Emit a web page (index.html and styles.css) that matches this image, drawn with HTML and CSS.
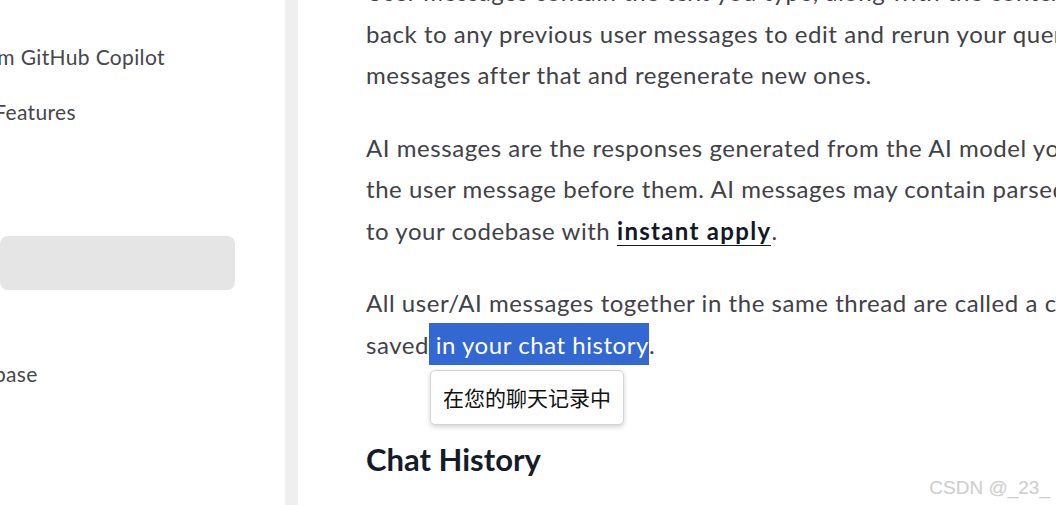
FILE: index.html
```html
<!DOCTYPE html>
<html lang="en">
<head>
<meta charset="utf-8">
<title>Chat</title>
<link rel="stylesheet" href="styles.css">
</head>
<body>
<div class="page">
  <aside class="sidebar">
    <ul class="nav">
      <li class="nav-item"><span class="nav-text shift-a">Migrate from GitHub Copilot</span></li>
      <li class="nav-item"><span class="nav-text shift-b">Core Features</span></li>
      <li class="nav-item nav-gap"><span class="nav-text shift-c">Chat</span></li>
      <li class="nav-item active"><span class="nav-text shift-c">Chat</span></li>
      <li class="nav-item"><span class="nav-text shift-e">Overview</span></li>
      <li class="nav-item"><span class="nav-text shift-d">Codebase</span></li>
    </ul>
  </aside>
  <div class="track"></div>
  <main class="content">
    <p class="para first">User messages contain the text you type, along with the context items. You can return<br>back to any previous user messages to edit and rerun your queries, which will delete all<br>messages after that and regenerate new ones.</p>
    <p class="para">AI messages are the responses generated from the AI model you selected, in response to<br>the user message before them. AI messages may contain parsed code blocks which can be applied<br>to your codebase with <a class="link" href="#">instant apply</a>.</p>
    <p class="para">All user/AI messages together in the same thread are called a conversation, and are<br>saved<span class="hl"> in your chat history<span class="tip">在您的聊天记录中</span></span>.</p>
    <h2 class="heading">Chat History</h2>
  </main>
</div>
<div class="watermark">CSDN @_23_</div>
</body>
</html>
```

FILE: styles.css
```css
html, body {
  margin: 0;
  padding: 0;
  background: #ffffff;
  overflow: hidden;
  width: 1056px;
  height: 505px;
}

.page {
  display: flex;
  height: 505px;
  font-family: "Lato", "Liberation Sans", sans-serif;
}

.sidebar {
  width: 285px;
  flex: none;
  overflow: hidden;
}

.nav {
  list-style: none;
  margin: 0;
  padding: 29px 0 0 0;
  width: 235px;
}

.nav-item {
  height: 54px;
  margin-bottom: 1px;
  display: flex;
  align-items: center;
  white-space: nowrap;
  font-size: 21px;
  letter-spacing: 0.35px;
  color: #46464d;
  border-radius: 8px;
}

.nav-gap {
  margin-bottom: 43px;
}

.nav-item.active {
  background: #e5e5e5;
}

.nav-text.shift-a { margin-left: -110px; }
.nav-text.shift-b { margin-left: -57px; }
.nav-text.shift-c { margin-left: -120px; }
.nav-text.shift-e { margin-left: -150px; }
.nav-text.shift-d { margin-left: -56px; }

.track {
  width: 13px;
  flex: none;
  background: #efefef;
}

.content {
  flex: none;
  padding-left: 68px;
  margin-top: -29px;
  color: #414148;
  font-size: 24px;
  letter-spacing: 0.55px;
  line-height: 41.5px;
}

.para {
  margin: 0 0 31px 0;
  white-space: nowrap;
}

.link {
  color: #111827;
  font-weight: 700;
  letter-spacing: 1.3px;
  text-decoration: none;
  border-bottom: 1px solid #111827;
}

.hl {
  position: relative;
  background: #3367d1;
  color: #ffffff;
  padding: 7px 0 6px 0;
}

.tip {
  position: absolute;
  left: 1px;
  top: 47px;
  padding: 0 12px;
  height: 53px;
  line-height: 53px;
  background: #ffffff;
  border: 1px solid #d4d4d4;
  border-radius: 5px;
  box-shadow: 0 2px 5px rgba(0, 0, 0, 0.18);
  color: #111111;
  font-family: "Noto Sans CJK SC", sans-serif;
  font-size: 21px;
  letter-spacing: 0;
  white-space: nowrap;
}

.heading {
  margin: 74px 0 0 0;
  color: #141b2b;
  font-size: 31px;
  font-weight: 700;
  letter-spacing: 0;
  line-height: 40px;
}

.watermark {
  position: absolute;
  right: 6px;
  bottom: 6px;
  font-family: "Liberation Sans", sans-serif;
  font-size: 19px;
  color: #d0d0d0;
  text-shadow: 0 0 1px rgba(0, 0, 0, 0.08);
}
```
